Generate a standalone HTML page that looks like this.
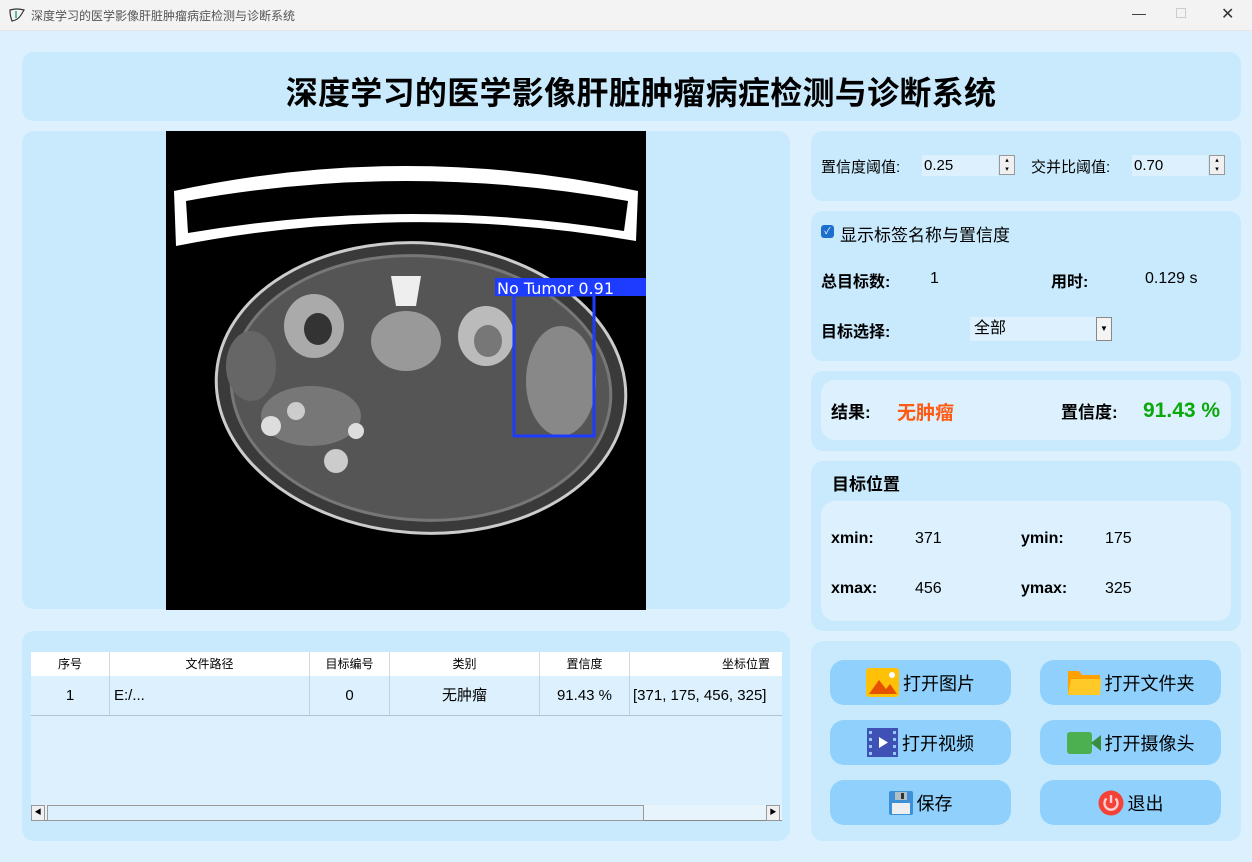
<!DOCTYPE html>
<html><head><meta charset="utf-8"><style>
*{margin:0;padding:0;box-sizing:border-box}
body{width:1252px;height:862px;background:#dcf1fd;font-family:"Liberation Sans","Noto Sans CJK SC",sans-serif;position:relative;overflow:hidden;color:#000}
.a{position:absolute}
.p{position:absolute;background:#c9eafd;border-radius:12px}
.in{position:absolute;background:#dcf1fd;border-radius:14px}
.b{font-weight:bold}
.btn{position:absolute;width:181px;height:45px;background:#8fd1fc;border-radius:14px;display:flex;align-items:center;justify-content:center;font-size:18px;gap:4px}
.th{position:absolute;top:652px;height:24px;font-size:12px;text-align:center;line-height:24px;background:#fff;border-right:1px solid #d8d8d8}
.td{position:absolute;top:676px;height:39px;font-size:15px;text-align:center;line-height:39px;border-right:1px solid #c0d4e0}
.spin{position:absolute;width:16px;height:20px;background:#f0f0f0;border:1px solid #999;font-size:7px;line-height:9px;text-align:center}
</style></head><body>
<div class="a" style="left:0;top:0;width:1252px;height:31px;background:#f3f3f3;border-bottom:1px solid #e5e5e5"></div>
<svg class="a" style="left:9px;top:8px" width="16" height="14"><path d="M1 2 Q8 0 15 2 L12 7 Q9 12 3 13 Q1 8 1 2Z" fill="none" stroke="#333" stroke-width="1.2"/><path d="M7 3 L7 10" stroke="#2a8" stroke-width="1.5"/></svg>
<div class="a" style="left:31px;top:7px;font-size:12px;color:#555">深度学习的医学影像肝脏肿瘤病症检测与诊断系统</div>
<div class="a" style="left:1132px;top:5px;font-size:14px;color:#333">—</div>
<div class="a" style="left:1176px;top:8px;width:10px;height:10px;border:1px solid #ccc"></div>
<div class="a" style="left:1221px;top:4px;font-size:16px;color:#333">✕</div>

<div class="p" style="left:22px;top:52px;width:1219px;height:69px"></div>
<div class="a b" style="left:0;width:1282px;top:68px;text-align:center;font-size:32px;letter-spacing:0.3px">深度学习的医学影像肝脏肿瘤病症检测与诊断系统</div>

<div class="p" style="left:22px;top:131px;width:768px;height:478px"></div>
<svg class="a" style="left:166px;top:131px" width="480" height="479" viewBox="0 0 480 479">
<rect width="480" height="479" fill="#000"/>
<path d="M8 60 Q240 10 472 60 L470 110 Q240 70 10 115Z" fill="#fff"/>
<path d="M20 70 Q240 30 462 70 L458 100 Q240 65 22 102Z" fill="#000"/>
<ellipse cx="255" cy="257" rx="205" ry="145" fill="#3a3a3a" stroke="#ccc" stroke-width="3" transform="rotate(4 255 257)"/>
<ellipse cx="255" cy="257" rx="190" ry="132" fill="#555" stroke="#777" stroke-width="3" transform="rotate(4 255 257)"/>
<ellipse cx="148" cy="195" rx="30" ry="32" fill="#aaa"/><ellipse cx="152" cy="198" rx="14" ry="16" fill="#333"/>
<ellipse cx="320" cy="205" rx="28" ry="30" fill="#bbb"/><ellipse cx="322" cy="210" rx="14" ry="16" fill="#777"/>
<ellipse cx="240" cy="210" rx="35" ry="30" fill="#999"/>
<path d="M225 145 L255 145 L250 175 L230 175Z" fill="#eee"/>
<ellipse cx="395" cy="250" rx="35" ry="55" fill="#888"/>
<ellipse cx="145" cy="285" rx="50" ry="30" fill="#777"/>
<circle cx="105" cy="295" r="10" fill="#ddd"/><circle cx="170" cy="330" r="12" fill="#ccc"/><circle cx="190" cy="300" r="8" fill="#ddd"/><circle cx="130" cy="280" r="9" fill="#ccc"/>
<ellipse cx="85" cy="235" rx="25" ry="35" fill="#666"/>
<rect x="348" y="164" width="80" height="141" fill="none" stroke="#1e3cff" stroke-width="3"/>
<rect x="329" y="147" width="151" height="18" fill="#1e3cff"/>
<text x="331" y="163" font-family="DejaVu Sans,sans-serif" font-size="16" fill="#fff">No Tumor 0.91</text>
</svg>

<div class="p" style="left:22px;top:631px;width:768px;height:210px"></div>
<div class="a" style="left:31px;top:652px;width:751px;height:169px;background:#dcf1fd"></div>
<div class="th" style="left:31px;width:79px">序号</div>
<div class="th" style="left:110px;width:200px">文件路径</div>
<div class="th" style="left:310px;width:80px">目标编号</div>
<div class="th" style="left:390px;width:150px">类别</div>
<div class="th" style="left:540px;width:90px">置信度</div>
<div class="th" style="left:630px;width:152px;text-align:right;padding-right:12px;border:none">坐标位置</div>
<div class="td" style="left:31px;width:79px">1</div>
<div class="td" style="left:110px;width:200px;text-align:left;padding-left:4px">E:/...</div>
<div class="td" style="left:310px;width:80px">0</div>
<div class="td" style="left:390px;width:150px">无肿瘤</div>
<div class="td" style="left:540px;width:90px">91.43 %</div>
<div class="td" style="left:630px;width:152px;border:none;text-align:left;padding-left:3px">[371, 175, 456, 325]</div>
<div class="a" style="left:31px;top:715px;width:751px;height:1px;background:#b0c4d0"></div>
<div class="a" style="left:31px;top:805px;width:751px;height:16px;background:#e8f4fc;border-bottom:1px solid #888"></div>
<div class="a" style="left:31px;top:805px;width:14px;height:16px;background:#f0f0f0;border:1px solid #999;font-size:7px;text-align:center;line-height:14px">◀</div>
<div class="a" style="left:47px;top:805px;width:597px;height:16px;background:#dcf1fd;border:1px solid #999"></div>
<div class="a" style="left:766px;top:805px;width:14px;height:16px;background:#f0f0f0;border:1px solid #999;font-size:7px;text-align:center;line-height:14px">▶</div>

<div class="p" style="left:811px;top:131px;width:430px;height:70px"></div>
<div class="a" style="left:821px;top:156px;font-size:15px">置信度阈值:</div>
<div class="a" style="left:922px;top:155px;width:76px;height:21px;background:#dcf1fd;font-size:15px;padding-left:2px;line-height:21px">0.25</div>
<div class="spin" style="left:999px;top:155px">▴<br>▾</div>
<div class="a" style="left:1031px;top:156px;font-size:15px">交并比阈值:</div>
<div class="a" style="left:1132px;top:155px;width:76px;height:21px;background:#dcf1fd;font-size:15px;padding-left:2px;line-height:21px">0.70</div>
<div class="spin" style="left:1209px;top:155px">▴<br>▾</div>

<div class="p" style="left:811px;top:211px;width:430px;height:150px"></div>
<div class="a" style="left:821px;top:225px;width:13px;height:13px;background:#1d6fce;border-radius:3px;color:#fff;font-size:9px;text-align:center;line-height:13px">✓</div>
<div class="a" style="left:840px;top:221px;font-size:17px">显示标签名称与置信度</div>
<div class="a b" style="left:821px;top:268px;font-size:16px">总目标数:</div>
<div class="a" style="left:930px;top:270px;font-size:16px">1</div>
<div class="a b" style="left:1051px;top:268px;font-size:16px">用时:</div>
<div class="a" style="left:1145px;top:270px;font-size:16px">0.129 s</div>
<div class="a b" style="left:821px;top:318px;font-size:16px">目标选择:</div>
<div class="a" style="left:970px;top:317px;width:126px;height:24px;background:#dcf1fd;font-size:16px;padding-left:4px;line-height:24px">全部</div>
<div class="a" style="left:1096px;top:317px;width:16px;height:24px;background:#f4f4f4;border:1px solid #888;font-size:8px;text-align:center;line-height:22px">▼</div>

<div class="p" style="left:811px;top:371px;width:430px;height:80px"></div>
<div class="in" style="left:821px;top:380px;width:410px;height:60px"></div>
<div class="a b" style="left:831px;top:398px;font-size:17px">结果:</div>
<div class="a b" style="left:897px;top:398px;font-size:19px;color:#ff5a14">无肿瘤</div>
<div class="a b" style="left:1061px;top:398px;font-size:17px">置信度:</div>
<div class="a b" style="left:1143px;top:399px;font-size:21px;color:#0aa80a">91.43 %</div>

<div class="p" style="left:811px;top:461px;width:430px;height:170px"></div>
<div class="a b" style="left:832px;top:470px;font-size:17px">目标位置</div>
<div class="in" style="left:821px;top:501px;width:410px;height:120px"></div>
<div class="a b" style="left:831px;top:530px;font-size:16px">xmin:</div>
<div class="a" style="left:915px;top:530px;font-size:16px">371</div>
<div class="a b" style="left:1021px;top:530px;font-size:16px">ymin:</div>
<div class="a" style="left:1105px;top:530px;font-size:16px">175</div>
<div class="a b" style="left:831px;top:580px;font-size:16px">xmax:</div>
<div class="a" style="left:915px;top:580px;font-size:16px">456</div>
<div class="a b" style="left:1021px;top:580px;font-size:16px">ymax:</div>
<div class="a" style="left:1105px;top:580px;font-size:16px">325</div>

<div class="p" style="left:811px;top:641px;width:430px;height:200px"></div>
<div class="btn" style="left:830px;top:660px"><svg width="33" height="29"><rect width="33" height="29" rx="3" fill="#ffc107"/><path d="M3 26 L13 12 L20 21 L24 16 L31 26Z" fill="#e65100"/><circle cx="26" cy="7" r="3" fill="#fff"/></svg>打开图片</div>
<div class="btn" style="left:1040px;top:660px"><svg width="34" height="28"><path d="M1 2 L12 2 L15 6 L33 6 L33 26 L1 26Z" fill="#ffa000"/><path d="M4 10 L34 10 L33 26 L1 26Z" fill="#ffca28"/></svg>打开文件夹</div>
<div class="btn" style="left:830px;top:720px"><svg width="31" height="29"><rect width="31" height="29" fill="#3f51b5"/><g fill="#90caf9"><rect x="2" y="3" width="3" height="3"/><rect x="2" y="10" width="3" height="3"/><rect x="2" y="17" width="3" height="3"/><rect x="2" y="24" width="3" height="3"/><rect x="26" y="3" width="3" height="3"/><rect x="26" y="10" width="3" height="3"/><rect x="26" y="17" width="3" height="3"/><rect x="26" y="24" width="3" height="3"/></g><path d="M12 9 L21 14.5 L12 20Z" fill="#fff"/></svg>打开视频</div>
<div class="btn" style="left:1040px;top:720px"><svg width="34" height="22"><rect width="25" height="22" rx="3" fill="#4caf50"/><path d="M24 11 L34 3 L34 19Z" fill="#388e3c"/></svg>打开摄像头</div>
<div class="btn" style="left:830px;top:780px"><svg width="24" height="24"><rect width="24" height="24" rx="2" fill="#3d8fd6"/><rect x="6" y="1" width="12" height="8" fill="#b0bec5"/><rect x="12" y="2" width="3" height="6" fill="#333"/><rect x="3" y="12" width="18" height="11" fill="#eceff1"/></svg>保存</div>
<div class="btn" style="left:1040px;top:780px"><svg width="26" height="26"><circle cx="13" cy="13" r="12.5" fill="#f44336"/><path d="M8.5 8.5 A6.5 6.5 0 1 0 17.5 8.5" fill="none" stroke="#ffcdd2" stroke-width="2.4"/><path d="M13 5 L13 13" stroke="#ffcdd2" stroke-width="2.4"/></svg>退出</div>
</body></html>
